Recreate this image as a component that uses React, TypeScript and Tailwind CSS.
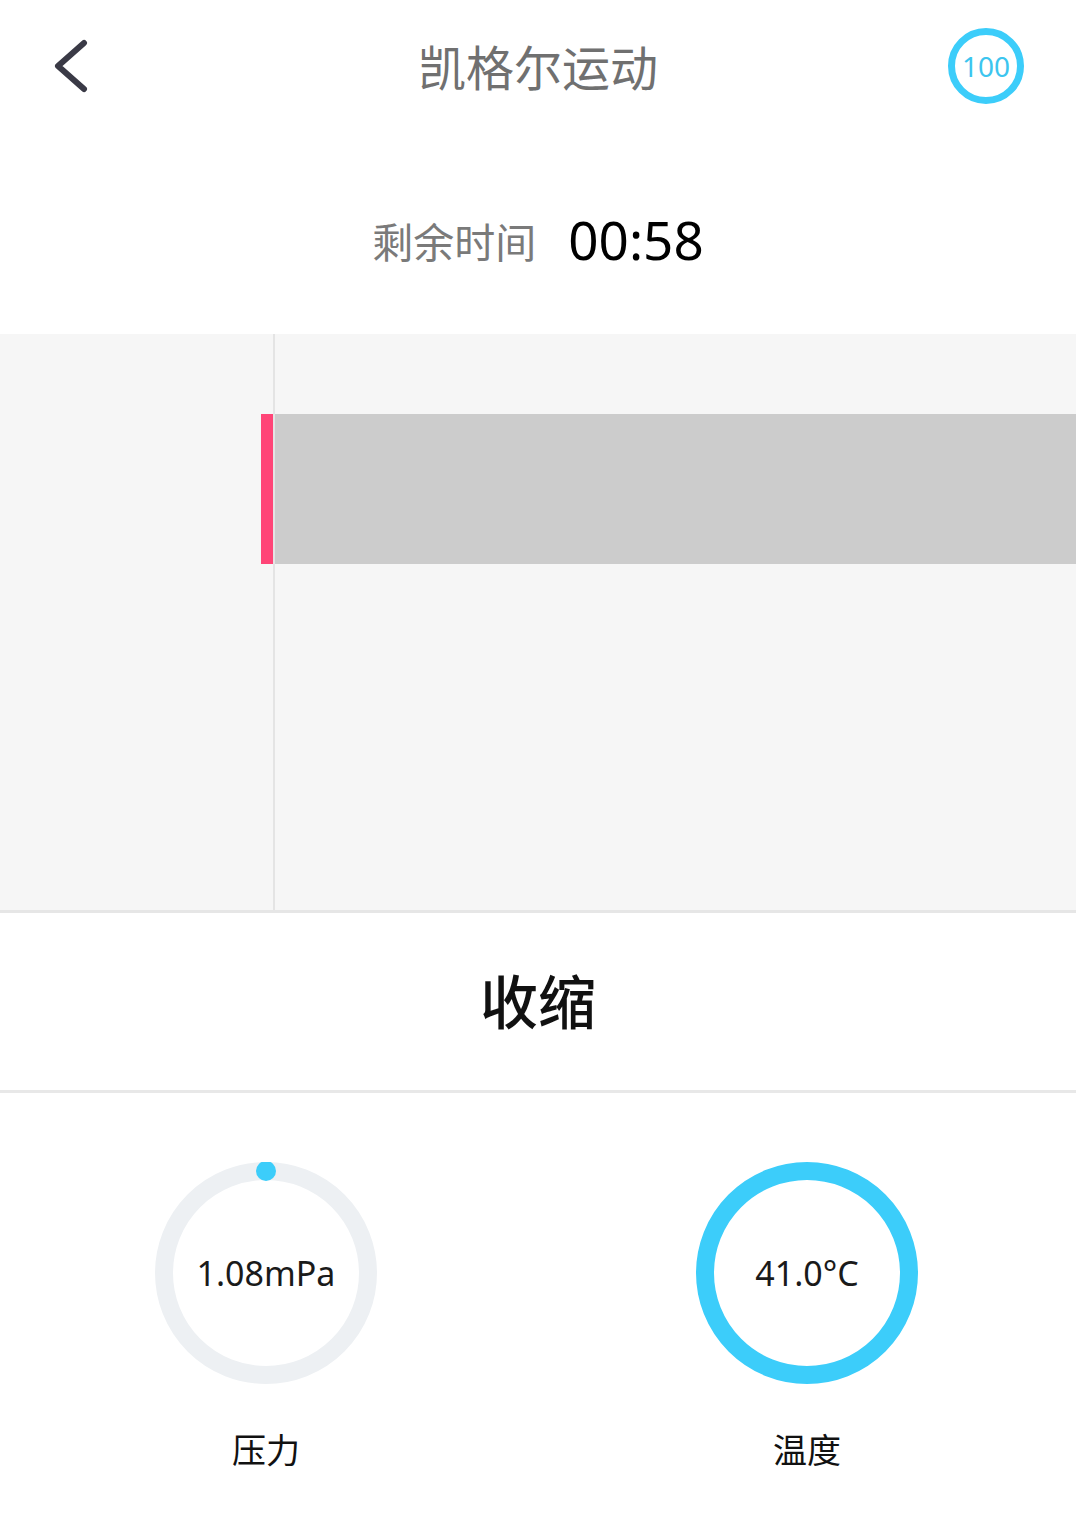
import React from "react"

const cjk = { fontFamily: '"Noto Sans", "Noto Sans CJK SC", sans-serif' }

function Gauge({ value, full, dot }: { value: string; full: boolean; dot?: boolean }) {
  return (
    <div className="relative h-[222px] w-[222px]">
      <svg width="222" height="222" viewBox="0 0 222 222" className="absolute inset-0">
        <circle cx="111" cy="111" r="102" fill="none" stroke={full ? "#3ccdfa" : "#edf0f3"} strokeWidth="18" />
        {dot && <circle cx="111" cy="9" r="10" fill="#3ccdfa" />}
      </svg>
      <div className="absolute inset-0 flex items-center justify-center text-[34px] text-[#1a1a1a]" style={cjk}>
        {value}
      </div>
    </div>
  )
}

export default function App() {
  return (
    <div className="w-[1076px] min-h-[1524px] bg-white" style={cjk}>
      {/* Header */}
      <div className="relative flex h-[136px] items-center justify-between pl-[52px] pr-[52px]">
        <svg width="40" height="56" viewBox="0 0 40 56" className="-mt-[2px]">
          <polyline points="32,4 6,27 32,50" fill="none" stroke="#3a3a46" strokeWidth="6" strokeLinecap="round" strokeLinejoin="round" />
        </svg>
        <h1 className="absolute left-1/2 -translate-x-1/2 text-[48px] text-[#707070]">凯格尔运动</h1>
        <div className="-mt-[4px] flex h-[76px] w-[76px] items-center justify-center rounded-full border-[7px] border-[#3ccdfa] text-[28px] text-[#3cc5ef]">
          100
        </div>
      </div>

      {/* Remaining time */}
      <div className="flex h-[198px] items-start justify-center gap-8 pt-[78px]">
        <span className="mt-[2px] text-[41px] leading-[52px] text-[#7a7a7a]">剩余时间</span>
        <span className="text-[53px] leading-[52px] text-black">00:58</span>
      </div>

      {/* Chart */}
      <div className="flex h-[579px] border-b-[3px] border-[#e6e6e6] bg-[#f6f6f6]">
        <div className="relative w-[275px] shrink-0 border-r-2 border-[#e4e4e4]">
          <div className="absolute right-0 top-[80px] h-[150px] w-[12px] bg-[#ff4577]" />
        </div>
        <div className="flex-1 pt-[80px]">
          <div className="h-[150px] w-full bg-[#cccccc]" />
        </div>
      </div>

      {/* Phase */}
      <div className="flex h-[180px] items-center justify-center border-b-[3px] border-[#e8e8e8]">
        <span className="text-[58px] font-medium text-[#111]">收缩</span>
      </div>

      {/* Gauges */}
      <div className="grid grid-cols-2 pt-[69px]">
        <div className="flex flex-col items-center pr-[6px]">
          <Gauge value="1.08mPa" full={false} dot />
          <span className="mt-[41px] text-[34px] text-[#111]">压力</span>
        </div>
        <div className="flex flex-col items-center">
          <Gauge value="41.0°C" full />
          <span className="mt-[41px] text-[34px] text-[#111]">温度</span>
        </div>
      </div>
    </div>
  )
}
